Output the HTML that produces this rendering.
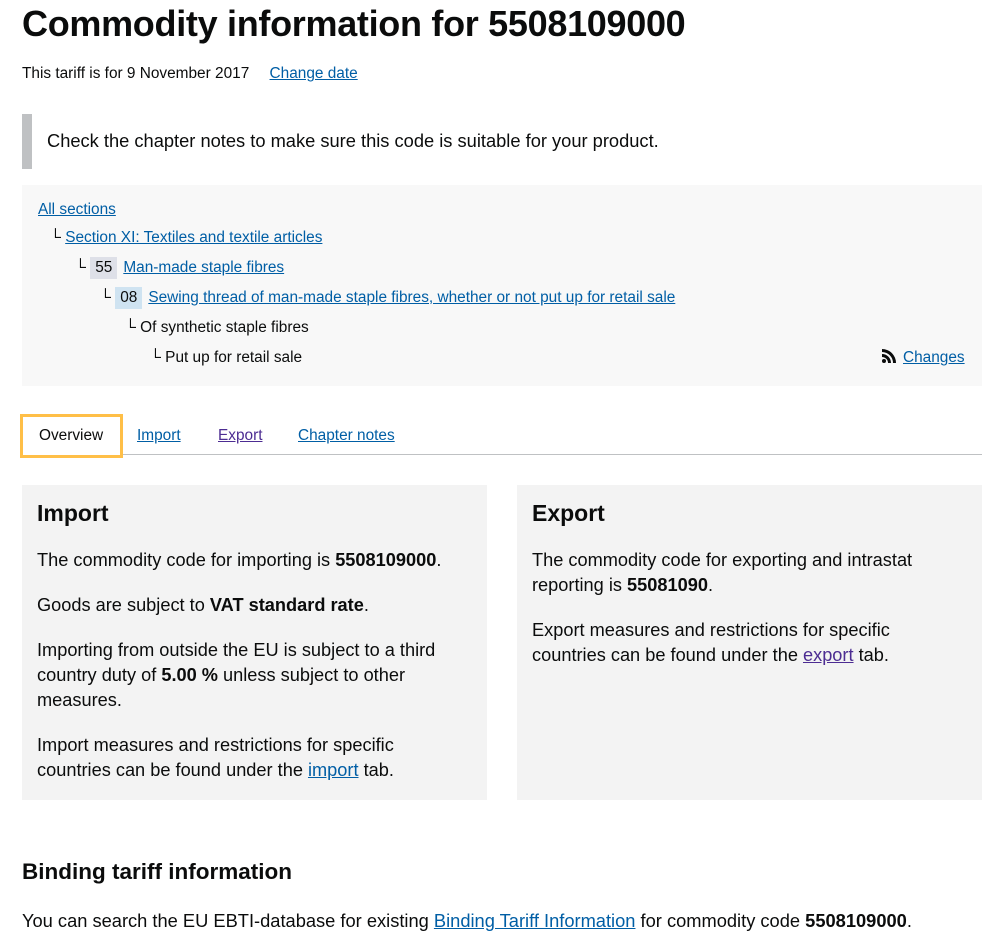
<!DOCTYPE html>
<html><head><meta charset="utf-8"><style>
*{margin:0;padding:0;box-sizing:border-box}
body{width:993px;height:946px;background:#fff;font-family:"Liberation Sans",Arial,sans-serif;color:#0b0c0c;position:relative;overflow:hidden}
a{color:#005ea5;text-decoration:underline}
.abs{position:absolute;white-space:nowrap}
h1{position:absolute;left:22px;top:3px;font-size:36px;font-weight:bold;letter-spacing:-0.3px}
.small{font-size:15.4px}
.grey{background:#f8f8f8}
.code{display:inline-block;padding:2px 5px;margin-right:6px;color:#0b0c0c}
.panel{position:absolute;top:485px;height:315px;background:#f3f3f3;padding:14px 15px}
.panel h2{font-size:23px;font-weight:bold;margin-bottom:21px;line-height:28px}
.panel p{font-size:18.2px;line-height:25px;margin-bottom:20px;width:412px}
</style></head><body>
<h1>Commodity information for 5508109000</h1>
<div class="abs small" style="left:22px;top:65px">This tariff is for 9 November 2017 <a style="margin-left:16px">Change date</a></div>
<div class="abs" style="left:22px;top:114px;width:10px;height:55px;background:#bfc1c3"></div>
<div class="abs" style="left:47px;top:130px;font-size:18.3px">Check the chapter notes to make sure this code is suitable for your product.</div>
<div class="abs grey" style="left:22px;top:185px;width:960px;height:201px"></div>
<div class="abs small" style="left:38px;top:201px"><a>All sections</a></div>
<div class="abs small" style="left:50px;top:229px">└ <a>Section XI: Textiles and textile articles</a></div>
<div class="abs small" style="left:75px;top:257px">└ <span class="code" style="background:#dee0e8">55</span><a>Man-made staple fibres</a></div>
<div class="abs small" style="left:100px;top:287px">└ <span class="code" style="background:#cfe3f1">08</span><a>Sewing thread of man-made staple fibres, whether or not put up for retail sale</a></div>
<div class="abs small" style="left:125px;top:319px">└ Of synthetic staple fibres</div>
<div class="abs small" style="left:150px;top:349px">└ Put up for retail sale</div>
<div class="abs small" style="left:882px;top:349px"><svg width="15" height="14" viewBox="0 0 15 14" style="vertical-align:-1px;margin-right:6px"><circle cx="2" cy="12" r="2" fill="#0b0c0c"/><path d="M0 5a9 9 0 0 1 9 9h-3a6 6 0 0 0-6-6z" fill="#0b0c0c"/><path d="M0 0a14 14 0 0 1 14 14h-3a11 11 0 0 0-11-11z" fill="#0b0c0c"/></svg><a>Changes</a></div>
<div class="abs" style="left:22px;top:454px;width:960px;height:1px;background:#bfc1c3"></div>
<div class="abs small" style="left:20px;top:414px;width:103px;height:44px;border:3px solid #ffbf47;background:#fff;padding:10px 0 0 16px">Overview</div>
<div class="abs small" style="left:137px;top:427px"><a>Import</a></div>
<div class="abs small" style="left:218px;top:427px"><a style="color:#4c2c92">Export</a></div>
<div class="abs small" style="left:298px;top:427px"><a>Chapter notes</a></div>
<div class="panel" style="left:22px;width:465px">
<h2>Import</h2>
<p>The commodity code for importing is <b>5508109000</b>.</p>
<p>Goods are subject to <b>VAT standard rate</b>.</p>
<p>Importing from outside the EU is subject to a third country duty of <b>5.00 %</b> unless subject to other measures.</p>
<p>Import measures and restrictions for specific countries can be found under the <a>import</a> tab.</p>
</div>
<div class="panel" style="left:517px;width:465px">
<h2>Export</h2>
<p>The commodity code for exporting and intrastat reporting is <b>55081090</b>.</p>
<p>Export measures and restrictions for specific countries can be found under the <a style="color:#4c2c92">export</a> tab.</p>
</div>
<div class="abs" style="left:22px;top:859px;font-size:22.5px;font-weight:bold">Binding tariff information</div>
<div class="abs" style="left:22px;top:910px;font-size:18.3px">You can search the EU EBTI-database for existing <a>Binding Tariff Information</a> for commodity code <b>5508109000</b>.</div>
</body></html>
